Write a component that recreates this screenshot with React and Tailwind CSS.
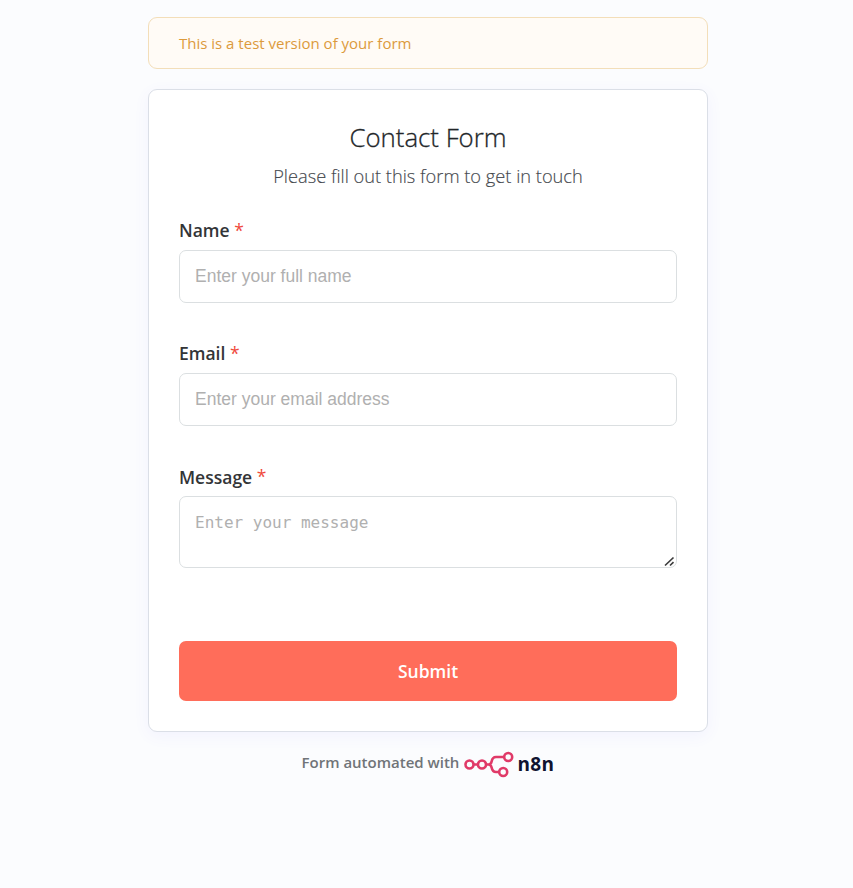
import React from 'react';

const fields = [
  { id: 'name', label: 'Name', placeholder: 'Enter your full name' },
  { id: 'email', label: 'Email', placeholder: 'Enter your email address' },
];

function Label({ id, children }) {
  return (
    <label htmlFor={id} className="block h-[38px] pt-[5px] text-[17.5px] leading-[26px] font-semibold text-[#333537]">
      {children} <span className="font-normal text-[#f04a3c]">*</span>
    </label>
  );
}

function Logo() {
  return (
    <svg width="50" height="28" viewBox="0 0 50 28" fill="none" stroke="#e03a68" strokeWidth="2.6">
      <circle cx="5.5" cy="14.5" r="4" />
      <circle cx="18" cy="14.5" r="4" />
      <circle cx="44.2" cy="7" r="4" />
      <circle cx="39.2" cy="22" r="4" />
      <path d="M9.5 14.5H14M22 14.5H24.5C26.5 14.5 27.2 13.3 27.6 11.5C28.2 8.5 29.2 7 32 7H40.2M24.5 14.5C26.5 14.5 27.2 15.7 27.6 17.5C28.2 20.5 29.2 22 32 22H35.2" />
    </svg>
  );
}

export default function App() {
  return (
    <main className="flex h-[888px] flex-col items-center bg-[#fbfcfe] pt-[17px] pl-[3px] font-['Open_Sans',sans-serif]">
      <div className="h-[52px] w-[560px] rounded-[9px] border border-[#f3deb9] bg-[#fffbf6] px-[30px] pt-[14px] text-[15px] leading-[22px] text-[#dc9a3c]">
        This is a test version of your form
      </div>
      <form className="mt-[20px] h-[643px] w-[560px] rounded-[9px] border border-[#dbdfe7] bg-white px-[30px] pt-[29px] shadow-[0_4px_16px_rgba(99,77,255,0.06)]">
        <h1 className="text-center text-[25.8px] leading-[36px] font-light text-[#222629] [-webkit-text-stroke:0.3px_#222629]">Contact Form</h1>
        <p className="mt-[8px] h-[49px] text-center text-[18.25px] leading-[26px] font-light text-[#45494e] [-webkit-text-stroke:0.15px_#45494e]">Please fill out this form to get in touch</p>
        {fields.map((f) => (
          <div key={f.id} className="h-[123px]">
            <Label id={f.id}>{f.label}</Label>
            <input id={f.id} placeholder={f.placeholder} className="block h-[53px] w-full rounded-[7px] border border-[#dbdfe1] px-[15px] font-['Liberation_Sans',sans-serif] text-[17.5px] placeholder:text-[#b0b0b0]" />
          </div>
        ))}
        <div className="relative">
          <Label id="message"><span className="relative top-px">Message</span></Label>
          <textarea id="message" placeholder="Enter your message" className="block h-[72px] w-full resize-none rounded-[7px] border border-[#dbdfe1] px-[15px] py-[14px] font-['DejaVu_Sans_Mono',monospace] text-[16px] placeholder:text-[#b0b0b0]" />
          <svg className="absolute right-[2px] bottom-[1px]" width="11" height="11" viewBox="0 0 11 11" fill="none" stroke="#3d3d3d" strokeWidth="1.7">
            <path d="M1 9.5L9.5 1.5M6 9.5L9.5 6.2" />
          </svg>
        </div>
        <button className="mt-[73px] h-[60px] w-full rounded-[7px] bg-[#ff6d5a] text-[17.5px] font-semibold text-white">Submit</button>
      </form>
      <div className="mt-[18px] flex h-[28px] items-center text-[15px] font-semibold text-[#707478]">
        <span className="mb-[4px]">Form automated with</span>
        <span className="ml-[5px]"><Logo /></span>
        <span className="ml-[3px] text-[19px] font-bold tracking-[0.4px] text-[#101330]">n8n</span>
      </div>
    </main>
  );
}
